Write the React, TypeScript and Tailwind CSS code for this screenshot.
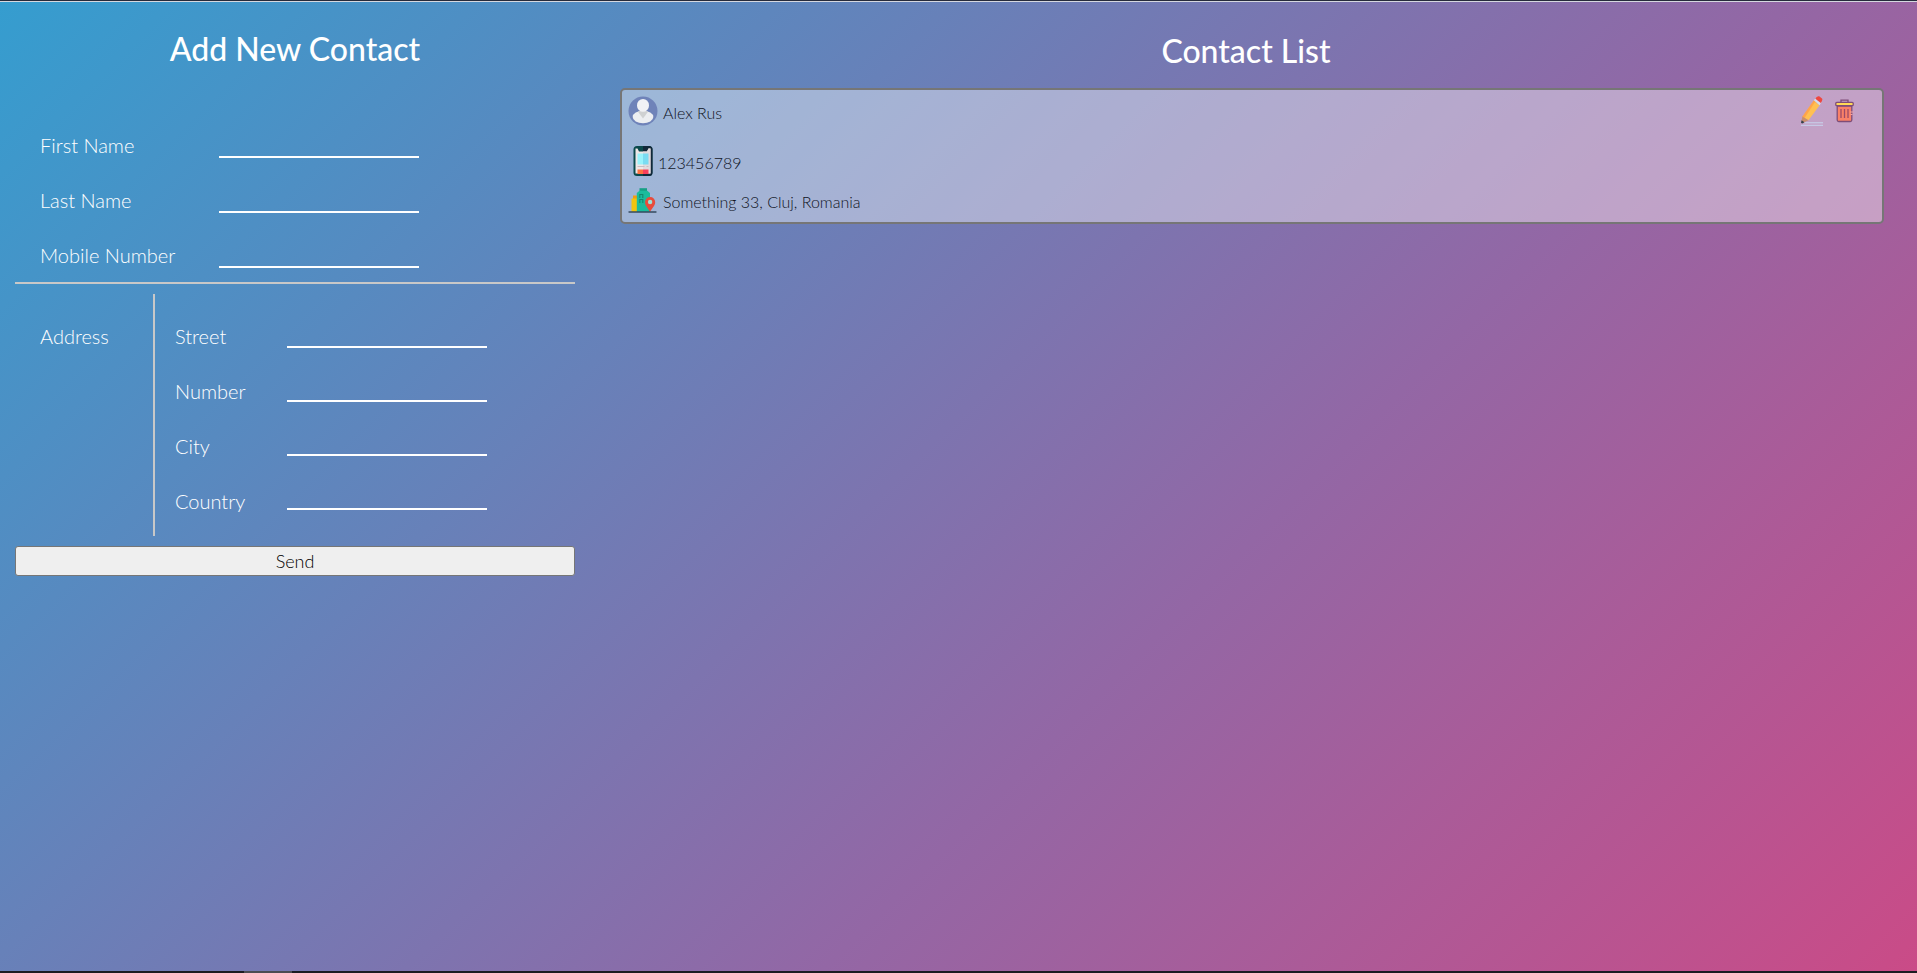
import { type ReactNode } from "react";

const personFields = [
  { id: "first-name", label: "First Name" },
  { id: "last-name", label: "Last Name" },
  { id: "mobile-number", label: "Mobile Number" },
];

const addressFields = [
  { id: "street", label: "Street" },
  { id: "number", label: "Number" },
  { id: "city", label: "City" },
  { id: "country", label: "Country" },
];

function LineInput({ id }: { id: string }) {
  return (
    <input
      id={id}
      type="text"
      className="h-[26px] w-[200px] border-b-2 border-white bg-transparent px-1 text-base text-white outline-none"
    />
  );
}

function AvatarIcon() {
  return (
    <svg viewBox="0 0 30 30" className="size-[30px]" aria-hidden="true">
      <circle cx="15" cy="15" r="14.5" fill="#6f83b9" />
      <ellipse cx="15" cy="21" rx="10.3" ry="6.2" fill="#eceef1" />
      <path d="M9.8 15.6 Q15 14 20.2 15.6 L15 22.4Z" fill="#cfd1d2" />
      <ellipse cx="15" cy="9.4" rx="6" ry="6.4" fill="#f1f2f5" />
    </svg>
  );
}

function PhoneIcon() {
  return (
    <svg viewBox="0 0 20 30" className="h-[30px] w-5" aria-hidden="true">
      <rect x="0.5" y="0" width="19" height="30" rx="3.5" fill="#0b4a4c" />
      <path d="M10 0h6a3.500 3.500 0 0 1 3.500 3.500v23a3.500 3.500 0 0 1-3.500 3.500h-6z" fill="#12283a" />
      <path d="M2.500 2.500h2l1.500 3h8l1.500-3h2v25H2.500z" fill="#eee7e7" />
      <path d="M10 5.500h4l1.500-3h2v25H10z" fill="#e0dadd" />
      <rect x="4.500" y="7.500" width="5.500" height="11" fill="#99f3fb" />
      <rect x="10" y="7.500" width="5.500" height="11" fill="#7adcf2" />
      <path d="M4.500 20.500h7M13.500 20.500h2" stroke="#c5bfc4" />
      <rect x="4.500" y="23.500" width="5.500" height="4.500" fill="#ff713f" />
      <rect x="10" y="23.500" width="5.500" height="4.500" fill="#f93e5a" />
    </svg>
  );
}

function CityIcon() {
  return (
    <svg viewBox="0 0 30 30" className="size-[30px]" aria-hidden="true">
      <path d="M5 10.500h4v4H5z" fill="#f39c12" />
      <path d="M3.500 13.500H9V27H3.500z" fill="#f1c40f" />
      <path d="M11.500 6V3.200h7.500V6z" fill="#16a085" />
      <path d="M8.800 27V8l2.700-2.300h7.800L22 8v19z" fill="#1abc9c" />
      <path
        d="M11.800 13V9.500h3V13M11.800 18v-3.500h3V18"
        fill="none"
        stroke="#14866f"
        strokeWidth="1.100"
      />
      <path
        d="M22 27C20.300 23.300 17 20.800 17 17.200a5 5 0 0 1 10.200 0c0 3.600-3.500 6.100-5.200 9.800z"
        fill="#e74c3c"
      />
      <circle cx="22.100" cy="17" r="2.200" fill="#9fdfd4" />
      <path d="M1 27h27" stroke="#34495e" strokeWidth="1.300" strokeLinecap="round" />
    </svg>
  );
}

function PencilIcon() {
  return (
    <svg viewBox="0 0 22 30" className="h-[30px] w-[22px]" aria-hidden="true">
      <path d="M12.800 4.200 16 6.700 5.500 23.300 1 21z" fill="#ffa44a" />
      <path d="M14 6 18.600 9.300 7.500 24.200 3.600 22z" fill="#ffc052" />
      <path d="M1.400 20.500 7.500 24.200 1.200 27.300.2 26.500z" fill="#c98f6d" />
      <path d="M.6 24.300 3.500 26.300 1.100 27.500 0 26.800z" fill="#33424e" />
      <path d="m12.800 4.200 2.100-2.300 5.500 4.200-1.800 3.200z" fill="#d5dcec" />
      <path d="M14.300 2.700Q15.900-.5 18.200.3L21 2.400Q22 4.200 19.800 7z" fill="#ee4740" />
      <path d="M3.500 26.800H22M0 29.300h22" stroke="#c9d4ee" strokeWidth="1" />
    </svg>
  );
}

function TrashIcon() {
  return (
    <svg viewBox="0 0 19 24" className="h-6 w-[19px]" aria-hidden="true">
      <path d="M6 3V1.200h7V3" fill="none" stroke="#7e4d78" strokeWidth="1.300" />
      <path
        d="M2.200 7v14q0 1.500 1.500 1.500h11.600q1.500 0 1.500-1.500V7z"
        fill="#f98168"
        stroke="#7e4d78"
        strokeWidth="1.300"
      />
      <rect x=".8" y="3.300" width="17.400" height="3.400" rx="1" fill="#ffda55" stroke="#7e4d78" strokeWidth="1.300" />
      <path d="M6 10v9M9.500 10v9M13 10v9" stroke="#9c4a66" strokeWidth="1.300" />
      <path d="M15 13h3.500M15.500 15.500h2" stroke="#f0a5a5" strokeWidth="1" />
    </svg>
  );
}

function ContactRow({ icon, children }: { icon: ReactNode; children: ReactNode }) {
  return (
    <div className="flex items-center gap-[5px]">
      {icon}
      <span className="pt-1">{children}</span>
    </div>
  );
}

export default function App() {
  return (
    <div className="flex min-h-screen flex-col border-t border-[#262b3b] bg-[#1c1c22] font-['Lato','Open_Sans',sans-serif]">
      <div className="flex flex-1 items-start gap-[45px] border-t border-[#d5d8e0] bg-[linear-gradient(135deg,#359dcf_0%,#6781b9_33%,#9367a5_62%,#ca4b87_100%)] pr-[33px] pl-[15px]">
        <form className="flex w-[560px] shrink-0 flex-col" onSubmit={(e) => e.preventDefault()}>
          <h1 className="pt-[23px] text-center text-[32px] leading-[48px] font-medium text-white">
            Add New Contact
          </h1>
          <div className="pt-11 pl-[25px]">
            {personFields.map(({ id, label }) => (
              <div key={id} className="flex h-[55px] items-center">
                <label htmlFor={id} className="w-[179px] text-[20px] font-light text-white">
                  {label}
                </label>
                <LineInput id={id} />
              </div>
            ))}
          </div>
          <hr className="border-t-2 border-[#c8c8c8]" />
          <div className="mt-[10px] flex text-[20px] leading-7 font-light text-white">
            <div className="w-[138px] pt-7 pl-[25px]">Address</div>
            <div className="flex border-l-2 border-[#c8c8c8] pt-[14px] pb-2 pl-5">
              <div className="flex w-28 flex-col">
                {addressFields.map(({ id, label }) => (
                  <label key={id} htmlFor={id} className="flex h-[55px] items-center">
                    {label}
                  </label>
                ))}
              </div>
              <div className="flex flex-col">
                {addressFields.map(({ id }) => (
                  <div key={id} className="flex h-[54px] items-center">
                    <LineInput id={id} />
                  </div>
                ))}
              </div>
            </div>
          </div>
          <button
            type="submit"
            className="mt-[10px] h-[30px] rounded-[3px] border border-[#767676] bg-[#efefef] text-lg leading-7 font-light text-black"
          >
            Send
          </button>
        </form>

        <main className="flex-1">
          <h2 className="pt-[25px] pr-3 pb-[13px] text-center text-[32px] leading-[48px] font-medium text-white">
            Contact List
          </h2>
          <article className="flex items-start justify-between rounded-[5px] border-2 border-[#767676] bg-white/40 pt-[6px] pr-7 pb-[7px] pl-[6px] text-base leading-6 font-light text-[#10141f]">
            <div className="flex flex-col">
              <ContactRow icon={<AvatarIcon />}>Alex Rus</ContactRow>
              <div className="pt-5 pb-[9px] pl-[5px]">
                <ContactRow icon={<PhoneIcon />}>123456789</ContactRow>
              </div>
              <ContactRow icon={<CityIcon />}>Something 33, Cluj, Romania</ContactRow>
            </div>
            <div className="flex items-center gap-3">
              <button type="button" aria-label="Edit contact">
                <PencilIcon />
              </button>
              <button type="button" aria-label="Delete contact">
                <TrashIcon />
              </button>
            </div>
          </article>
        </main>
      </div>
      <div className="flex h-0.5 pl-[244px]">
        <div className="w-12 bg-[#4c4c52]" />
      </div>
    </div>
  );
}
